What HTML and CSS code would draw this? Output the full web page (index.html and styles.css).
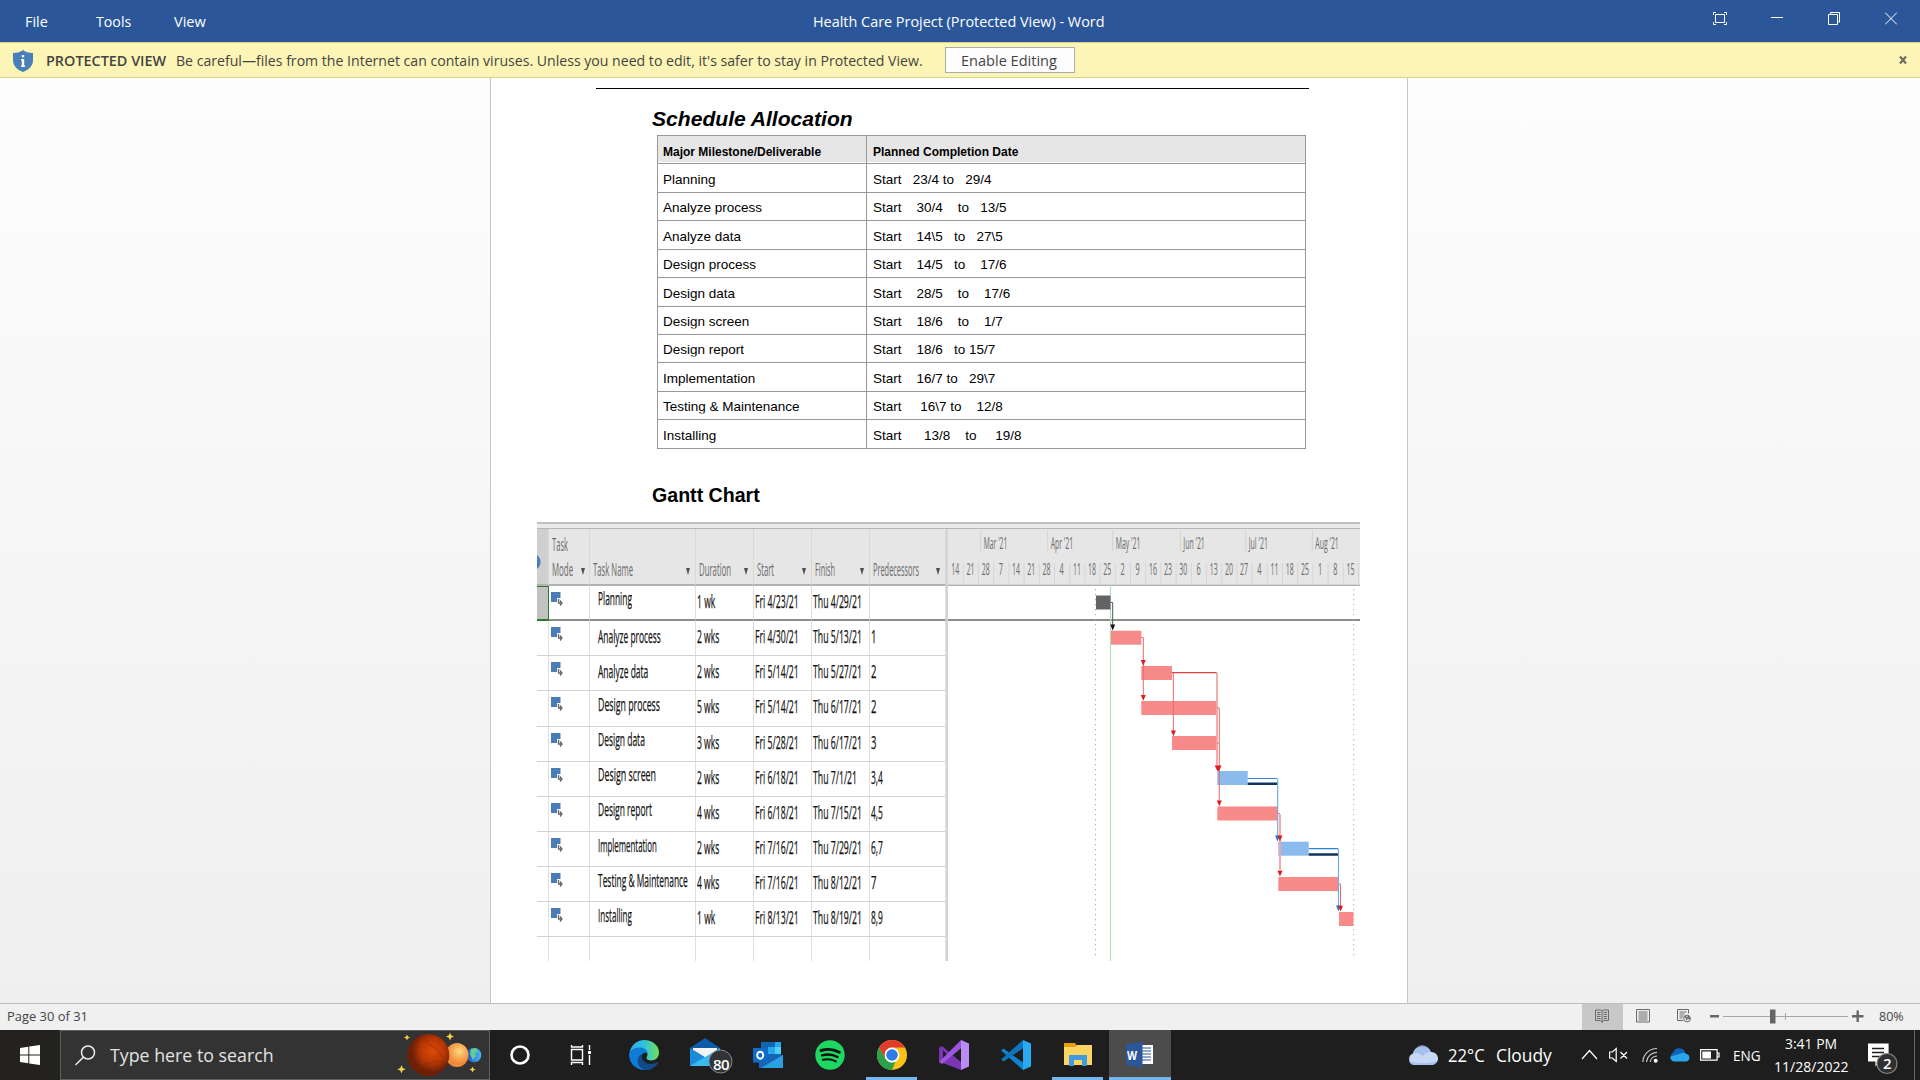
FILE: index.html
```html
<!DOCTYPE html>
<html lang="en">
<head>
<meta charset="utf-8">
<title>Health Care Project (Protected View) - Word</title>
<link rel="stylesheet" href="styles.css">
</head>
<body>
<header class="titlebar">
  <nav class="menu">
    <span class="slot slot-file"><span class="fit" data-w="23">File</span></span>
    <span class="slot slot-tools"><span class="fit" data-w="35">Tools</span></span>
    <span class="slot"><span class="fit" data-w="32">View</span></span>
  </nav>
  <h1 class="title"><span class="fit" data-w="292">Health Care Project (Protected View) - Word</span></h1>
  <div class="winbtns">
    <svg width="14" height="13" viewBox="0 0 14 13"><path d="M.5 3V.5H3M11 .5h2.500V3M.5 10v2.500H3M13.500 10v2.500H11M2.500 2.500h9v8h-9z"/></svg>
    <svg width="12" height="13" viewBox="0 0 12 13"><path d="M0 5.500h12"/></svg>
    <svg width="12" height="13" viewBox="0 0 12 13"><path d="M.5 2.500h9v10h-9zM2.500 2.500v-2h9v9.500h-2"/></svg>
    <svg width="12" height="13" viewBox="0 0 12 13"><path d="M0 .5l12 12M12 .5l-12 12"/></svg>
  </div>
</header>

<section class="banner">
  <svg class="shield" width="20" height="22" viewBox="0 0 20 22"><path fill="#4a7ebb" d="M10 0c2 2 5.500 3 10 3v7c0 6-4 9.500-10 12C4 19.500 0 16 0 10V3c4.500 0 8-1 10-3z"/><path fill="#fff" d="M8.800 5h2.400v2.300H8.800zM8 9h3.200v6.500H12V17H8v-1.500h.8v-5H8z"/></svg>
  <strong class="fit" data-w="120">PROTECTED VIEW</strong>
  <span class="fit banner-text" data-w="747">Be careful—files from the Internet can contain viruses. Unless you need to edit, it's safer to stay in Protected View.</span>
  <button class="enable"><span class="fit" data-w="96">Enable Editing</span></button>
  <svg class="dismiss" width="8" height="8" viewBox="0 0 8 8"><path d="M1 .5l6 7M7 .5l-6 7" stroke="#6f6d5c" stroke-width="2.200"/></svg>
</section>

<main class="canvas">
  <article class="page">
    <hr class="rule">
    <h2 class="h-schedule"><span class="fit" data-w="200.500">Schedule Allocation</span></h2>
    <div class="schedule">
      <div class="th"><span class="fit" data-w="158">Major Milestone/Deliverable</span></div><div class="th"><span class="fit" data-w="145">Planned Completion Date</span></div>
      <div>Planning</div><div>Start   23/4 to   29/4</div>
      <div><span class="cut">Analyze process</span></div><div>Start    30/4    to   13/5</div>
      <div>Analyze data</div><div>Start    14\5   to   27\5</div>
      <div><span class="cut">Design process</span></div><div>Start    14/5   to    17/6</div>
      <div>Design data</div><div>Start    28/5    to    17/6</div>
      <div><span class="cut">Design screen</span></div><div>Start    18/6    to    1/7</div>
      <div><span class="cut">Design report</span></div><div>Start    18/6   to 15/7</div>
      <div>Implementation</div><div>Start    16/7 to   29\7</div>
      <div><span class="cut">Testing &amp; Maintenance</span></div><div>Start     16\7 to    12/8</div>
      <div>Installing</div><div>Start      13/8    to     19/8</div>
    </div>
    <h2 class="h-gantt"><span class="fit" data-w="108">Gantt Chart</span></h2>
    <figure class="gantt">
      <div class="gantt-strip"></div>
      <div class="gantt-body">
        <div class="tasks" id="tasks">
          <div class="hd info"></div>
          <div class="hd mode"><span><span class="fit" data-w="16">Task</span><br><span class="fit" data-w="21">Mode</span></span><i></i></div>
          <div class="hd"><span class="fit" data-w="40">Task Name</span><i></i></div>
          <div class="hd"><span class="fit" data-w="32">Duration</span><i></i></div>
          <div class="hd"><span class="fit" data-w="17">Start</span><i></i></div>
          <div class="hd"><span class="fit" data-w="20">Finish</span><i></i></div>
          <div class="hd"><span class="fit" data-w="46">Predecessors</span><i></i></div>
        </div>
        <svg class="timeline" width="412" height="432" viewBox="948 529 412 432">
          <rect x="948" y="529" width="412" height="55.500" fill="#e6e6e6"/>
          <path d="M948 585.300h412" stroke="#b2b2b2" stroke-width="1.500"/>
          <path d="M948 620h412" stroke="#8c8c8c" stroke-width="2"/>
          <g id="scale"></g>
          <path d="M1095.500 589v370M1353.700 589v370" stroke="#aaa" stroke-dasharray="1.300 3.700"/>
          <path d="M1110.500 585v376" stroke="#b7ddb8" stroke-width="1.200"/>
          <rect x="1096" y="595.500" width="14.500" height="14" fill="#636363"/>
          <g fill="#f88a8a">
            <rect x="1111" y="630.700" width="30.300" height="14"/><rect x="1141.300" y="666" width="30.700" height="14"/>
            <rect x="1141.300" y="701" width="75.700" height="14"/><rect x="1172" y="736" width="45" height="14"/>
            <rect x="1217.300" y="806.500" width="60.400" height="14"/><rect x="1278.300" y="877" width="60.400" height="14"/>
            <rect x="1339" y="912" width="14.500" height="14"/>
          </g>
          <g fill="#8bbbed"><rect x="1217.300" y="771" width="30.400" height="14"/><rect x="1278.300" y="841.700" width="30.400" height="14"/></g>
          <path d="M1247.700 783.800h30M1308.700 854.500h30" stroke="#12335e" stroke-width="2.400"/>
          <g fill="none" stroke="#2e82d8" stroke-width="1.200"><path d="M1247.700 778.500h29.500M1308.700 848.700h29.500"/><path stroke="#76addf" d="M1277.700 779v57M1338.500 849v57"/></g>
          <path d="M1110.700 602.500h2V626" fill="none" stroke="#555"/>
          <g fill="none" stroke="#e8696b">
            <path d="M1141.300 637.500h2V697M1173.300 672.500V731M1172 672.500h44.500"/>
            <path stroke="#f3a5a6" stroke-width="1.800" d="M1217 673v93M1280 814v58"/>
            <path d="M1217 708h2.300v94M1217 743h2M1277.700 813.500h2M1338.700 884h1.800v22"/>
          </g>
          <path d="M1172 672.700h44.500" stroke="#e04144" stroke-width="1.300"/>
          <path fill="#111" d="M1110.200 624.500h5l-2.500 6z"/>
          <path fill="#2678cf" d="M1275 835.500h5l-2.500 6zM1336 905.500h5l-2.500 6z"/>
          <path fill="#dd1c1f" d="M1140.800 660h5l-2.500 5.700zM1140.800 695h5l-2.500 5.700zM1170.900 730.500h5l-2.500 5.700zM1214.700 765.500h6.900l-2.500 5.200h-1.900zM1216.800 800.500h5l-2.500 5.700zM1277.500 835.500h5l-2.500 5.700zM1277.500 870.700h5l-2.500 5.700zM1338 905.700h5l-2.500 5.700z"/>
        </svg>
      </div>
    </figure>
  </article>
</main>

<footer class="status">
  <span class="fit pages" data-w="80.500">Page 30 of 31</span>
  <div class="view active"><svg width="14" height="14" viewBox="0 0 14 14"><path d="M7 2v12M.5 1h5L7 2l1.500-1h5v10.500h-5L7 13l-1.500-1.500h-5zM2 3.500h3.500M2 5.500h3.500M2 7.500h3.500M2 9.500h3.500M8.500 3.500H12M8.500 5.500H12M8.500 7.500H12M8.500 9.500H12"/></svg></div>
  <div class="view"><svg width="14" height="14" viewBox="0 0 14 14"><path d="M.5.500h13v12.500H.5zM2.500 3h9M2.500 5h9M2.500 7h9M2.500 9h9M2.500 11h9"/></svg></div>
  <div class="view"><svg width="14" height="14" viewBox="0 0 14 14"><path d="M6 11.500H.5V.5h11v4M2.500 3h7M2.500 5h5M2.500 7h4M2.500 9h3"/><circle cx="10" cy="9.500" r="3.400" fill="#eee"/><path d="M8 7.500l2 1.500-.5 2M11 7l1 2.500 1-.5" stroke-width="1.600"/></svg></div>
  <svg class="zoombar" width="154" height="16" viewBox="0 0 154 16"><path stroke="#a6a6a6" d="M13 8.500h125M75.500 5v7"/><path stroke="#666" stroke-width="2.400" d="M0 8.200h9M142 8.200h11.500M147.700 2.500v11.500"/><path fill="#666" d="M60 1.500h5.500v14H60z"/></svg>
  <span class="fit" data-w="25">80%</span>
</footer>

<div class="taskbar">
  <div class="start"><svg width="20" height="20" viewBox="0 0 20 20"><path fill="#fff" d="M0 3l8.300-1.200v7.700H0zM9.300 1.600L20 0v9.500H9.300zM0 10.500h8.300v7.800L0 17.100zM9.300 10.500H20V20L9.300 18.400z"/></svg></div>
  <div class="search">
    <svg width="21" height="21" viewBox="0 0 21 21"><circle cx="13" cy="7.500" r="6.500" fill="none" stroke="#eee" stroke-width="1.500"/><path d="M8.300 12.200L.5 20" stroke="#eee" stroke-width="1.500"/></svg>
    <span class="fit" data-w="164">Type here to search</span>
    <svg class="planets" width="86" height="46" viewBox="397 1032 86 46">
      <defs>
        <radialGradient id="mars" cx=".6" cy=".4"><stop offset="0" stop-color="#e04a08"/><stop offset=".6" stop-color="#b53606"/><stop offset="1" stop-color="#6e1f06"/></radialGradient>
        <radialGradient id="venus" cx=".6" cy=".35"><stop offset="0" stop-color="#ffd97c"/><stop offset="1" stop-color="#f08a3a"/></radialGradient>
        <linearGradient id="earth"><stop offset="0" stop-color="#2450c8"/><stop offset="1" stop-color="#49b9f5"/></linearGradient>
      </defs>
      <circle cx="474" cy="1055" r="7.300" fill="url(#earth)"/><path fill="#5fd08a" d="M471 1049l5-1 2 4-3 1 1 3-3 4-3-6z"/>
      <ellipse cx="457" cy="1055" rx="11.500" ry="12" fill="url(#venus)"/>
      <circle cx="428.300" cy="1055" r="21" fill="url(#mars)"/>
      <path fill="none" stroke="#8f2b08" stroke-width="1.500" opacity=".35" d="M427 1035c-4 8 4 10 9 14s4 10 11 9M409 1049c6-4 9 2 7 8M415 1068c9-2 15-8 29-7"/>
      <path fill="#f8cf45" d="M407 1034.500l.9 2.100 2.100.9-2.100.9-.9 2.100-.9-2.100-2.100-.9 2.100-.9zM450 1032.500l1.200 2.800 2.800 1.200-2.800 1.200-1.200 2.800-1.200-2.800-2.800-1.200 2.800-1.200zM401.500 1065l1.200 3.100 3 1.200-3 1.200-1.200 3.100-1.200-3.100-3-1.200 3-1.200zM472.500 1066.500l.9 2.100 2.100.9-2.100.9-.9 2.100-.9-2.100-2.100-.9 2.100-.9z"/>
    </svg>
  </div>
  <div class="apps">
    <div class="app"><svg width="32" height="32" viewBox="0 0 32 32"><circle cx="16" cy="16" r="8.500" fill="none" stroke="#fff" stroke-width="2.600"/></svg></div>
    <div class="app"><svg width="32" height="32" viewBox="0 0 32 32"><path fill="none" stroke="#fff" stroke-width="1.400" d="M5.500 10.500h11v10.500h-11zM5.500 6v2h11V6M5.500 26v-2.500h11V26M23.500 6v5M23.500 16v10"/><path fill="#fff" d="M22 12h3v3h-3z"/></svg></div>
    <div class="app"><svg width="32" height="32" viewBox="0 0 32 32">
      <defs><linearGradient id="e1" x1="0" x2="1"><stop offset="0" stop-color="#35a8e8"/><stop offset=".5" stop-color="#2ec2df"/><stop offset="1" stop-color="#6fe34f"/></linearGradient></defs>
      <path fill="url(#e1)" d="M1.500 14C3 6 9 1 16 1c8.500 0 15 5.500 15 12.500 0 5-3.500 8-8 8-3 0-4.500-1.200-4.500-2.500s1-1.500 1-4c0-3-3-5.500-7-5.500-5 0-9 2-11 4.500z"/>
      <path fill="#0d7cd6" d="M1 16c0-4 5-7.500 11-7.500 4.500 0 7.500 2.700 7.500 6-1.500-1-3.500-1-5 .5-3 3-2 9 2 12.500 1.500 1.500 3 2.500 4 3A15.300 15.300 0 0 1 1 16z"/>
      <path fill="#114a8b" d="M14 15c-3 1.500-4.500 4-4.500 7 0 4.500 4 8.500 8.500 9 5 .3 9.500-2.500 12-7 .3-.7-.2-1-.8-.7C20 28 12.500 22.500 14 15z"/></svg></div>
    <div class="app"><svg width="44" height="38" viewBox="0 0 44 38"><path fill="#0b5cab" d="M0 12L15 2l15 10v8H0z"/><path fill="#f4f4f4" d="M3 12h24v3l-12 8-12-8z"/><path fill="#1c8ad8" d="M0 12l30 18H0z"/><path fill="#39b8f2" d="M30 12v18H0l15-9z"/><path fill="#f4f4f4" d="M3 12h24l-12 9z"/><circle cx="30.500" cy="25.500" r="11.500" fill="#303438" stroke="#888"/></svg><span class="badge">80</span></div>
    <div class="app"><svg width="32" height="32" viewBox="0 0 32 32"><path fill="#1066b5" d="M9 3h20v14H9z"/><path fill="#28a8ea" d="M16 8h7v7h-7zM23 3h6v5h-6z"/><path fill="#50d0f8" d="M23 8h6v7h-6z"/><path fill="#1565b5" d="M7 16h24v13H7z"/><path fill="#2a9fe4" d="M31 16v13H9z"/><path fill="#0f6cc4" d="M1 9h14.500v14.500H1z"/><ellipse cx="8.200" cy="16.200" rx="3" ry="3.500" fill="none" stroke="#fff" stroke-width="1.900"/></svg></div>
    <div class="app"><svg width="32" height="32" viewBox="0 0 32 32"><circle cx="16" cy="16" r="14.700" fill="#1ed760"/><path fill="none" stroke="#101010" stroke-linecap="round" d="M7 11.500c6-1.800 13-1.200 18.300 1.700" stroke-width="2.900"/><path fill="none" stroke="#101010" stroke-linecap="round" d="M8 16.300c5-1.400 11-.9 15.500 1.700" stroke-width="2.400"/><path fill="none" stroke="#101010" stroke-linecap="round" d="M8.800 20.800c4.500-1.100 9-.7 13 1.600" stroke-width="2"/></svg></div>
    <div class="app open"><svg width="32" height="32" viewBox="0 0 32 32"><circle cx="16" cy="16" r="15" fill="#fbc116"/><path fill="#e33b2e" d="M3 8.500A15 15 0 0 1 29 8.500H16a7.500 7.500 0 0 0-6.800 4.500l-.3 6z"/><path fill="#2da04a" d="M3 8.500l6.500 11.200A7.500 7.500 0 0 0 19.500 22.600L16 31A15 15 0 0 1 3 8.500z"/><circle cx="16" cy="16" r="7.400" fill="#fff"/><circle cx="16" cy="16" r="5.800" fill="#2f7bea"/></svg></div>
    <div class="app"><svg width="32" height="32" viewBox="0 0 32 32"><path fill="#7a35b5" d="M1 9l3-2 20 17-1 7L1 22.500z M5 11.500v9L10 16z" fill-rule="evenodd"/><path fill="#9a56dc" d="M4 25l-3-2L23 1l1.500 7z"/><path fill="#b98bf3" d="M23 1l8 3.500v23L23 31z"/></svg></div>
    <div class="app"><svg width="32" height="32" viewBox="0 0 32 32"><path fill="#1083cf" d="M1 11.500L3.500 9.500 25 25l-2 6z"/><path fill="#0d74bd" d="M1 20.500l2.500 2L25 8l-2-7z"/><path fill="#2aaaf2" d="M23 1l8 3.500v23L23 31z"/></svg></div>
    <div class="app open"><svg width="32" height="32" viewBox="0 0 32 32"><path fill="#e3a008" d="M2 4h11l2 3v5H2z"/><path fill="#fcd462" d="M2 8h11l2-2h15v20H2z"/><path fill="#3f9be0" d="M7 16h18v11h-5v-6h-8v6H7z"/></svg></div>
    <div class="app open current"><svg width="32" height="32" viewBox="0 0 32 32"><path fill="#fff" d="M17 6h12v19H17z"/><path stroke="#2b579a" stroke-width="1.200" d="M17 9h10M17 12h10M17 15h10M17 18h10M17 21h10"/><path fill="#2b579a" d="M2 5.500L18.500 2.500v26.500L2 25.500z"/></svg><b>W</b></div>
  </div>
  <div class="tray">
    <svg class="cloud" width="30" height="22" viewBox="0 0 30 22"><path fill="#c7d7f6" d="M6 21a6 6 0 0 1-1-11.500A9.500 9.500 0 0 1 23 8a6.500 6.500 0 0 1 1 13z"/><path fill="#8fb0ea" d="M1 17c8 3 20 3 28 0-1 3-3 4-5 4H6c-2 0-4-1-5-4zM6 9c4-.5 7 1 9 3 2-3 5-4.500 8-4C21 3 17 1 14 1S7 4 6 9z" opacity=".6"/></svg>
    <span class="fit temp" data-w="37">22°C</span>
    <span class="fit cloudy" data-w="56">Cloudy</span>
    <svg class="t-caret" width="17" height="16" viewBox="0 0 17 16"><path d="M1 12l7.500-8.500L16 12"/></svg>
    <svg class="t-vol" width="19" height="16" viewBox="0 0 19 16"><path d="M.6 5v6h2.800l3.800 3.500v-13L3.400 5zM11.500 5l6.500 6.500M18 5l-6.500 6.500"/></svg>
    <svg class="t-net" width="16" height="16" viewBox="0 0 16 16"><path opacity=".75" d="M.8 15A14 14 0 0 1 15 1.500M4.500 15A10.500 10.500 0 0 1 15 5.300M8.200 15A7 7 0 0 1 15 9"/><circle cx="13.700" cy="13.700" r="1.400" fill="#fff"/></svg>
    <svg class="t-drive" width="20" height="14" viewBox="0 0 20 14"><path fill="#0f62b8" stroke="none" d="M4 12A4 4 0 0 1 3 4.500 6.500 6.500 0 0 1 15 4l2 6z"/><path fill="#28a8ea" stroke="none" d="M4 13.500a4 4 0 0 1-3.500-5L11 5.500a5 5 0 0 1 5 .2A4 4 0 0 1 16.500 13.500z"/></svg>
    <svg class="t-bat" width="20" height="12" viewBox="0 0 20 12"><path d="M.6.700h16.500v10.500H.6zM17.500 4h1.500v4h-1.500"/><path fill="#fff" stroke="none" d="M2.300 2.500h8.700v7H2.300z"/></svg>
    <span class="fit eng" data-w="28">ENG</span>
    <div class="clock"><span class="fit" data-w="52">3:41 PM</span><span class="fit" data-w="75">11/28/2022</span></div>
    <div class="notes"><svg width="30" height="32" viewBox="0 0 30 32"><path fill="#fff" d="M0 1h20v17h-8l-4 4v-4H0z"/><path stroke="#1e1e1e" stroke-width="1.400" d="M4 5.500h12M4 9.500h12M4 13.500h8"/><circle cx="19" cy="20.500" r="10" fill="#303030" stroke="#888"/></svg><span class="badge count">2</span></div>
    <div class="peek"></div>
  </div>
</div>
<script src="app.js"></script>
</body>
</html>
```
FILE: styles.css
```css
* { box-sizing: border-box; }
body {
  margin: 0; width: 1920px; height: 1080px; overflow: hidden;
  display: grid; grid-template-rows: 42px 36px 925px 27px 50px;
  font: 15px "Open Sans", "Noto Sans", sans-serif; background: #fff;
}
h1, h2, figure { margin: 0; font: inherit; }
svg { display: block; flex: none; }
.fit { display: inline-block; white-space: nowrap; transform-origin: 0 50%; flex: none; }

/* title bar */
.titlebar { background: #2b579a; color: #fff; display: grid; grid-template-columns: 813px 1fr auto; align-items: center; }
.menu { display: flex; padding-left: 25px; }
.slot-file { width: 71px; }
.slot-tools { width: 78px; }
.winbtns { display: flex; padding: 0 23px 5px 0; gap: 45px; }
.winbtns svg { fill: none; stroke: #fff; }
.winbtns svg:first-child { margin-right: -1px; }

/* protected view banner */
.banner { background: #fcf5b6; border: solid #d8d38c; border-width: 1px 0; display: flex; align-items: center; color: #444; padding: 0 13px; }
.shield { margin-right: 13px; margin-top: 2px; }
.banner strong { font-weight: 600; }
.banner-text { margin-left: 10px; }
.enable { width: 130px; height: 26px; margin-left: 22px; padding: 0 0 0 15px; border: 1px solid #ababab; background: #fdfdfd; color: #444; font: inherit; text-align: left; display: flex; align-items: center; }
.dismiss { margin-left: auto; }

/* document */
.canvas { background: linear-gradient(#fdfdfd, #efefef); padding-left: 490px; }
.page { width: 918px; height: 925px; background: #fff; border: solid #c6c6c6; border-width: 0 1px; padding: 10px 0 0 46px; color: #000; font-family: "Liberation Sans", Arial, sans-serif; }
.rule { width: 713px; height: 1px; border: 0; background: #000; margin: 0 0 0 59px; }
.h-schedule { margin-left: 115px; height: 46px; padding-top: 18px; font: italic bold 20.500px/24px "Liberation Sans", Arial, sans-serif; }
.schedule {
  margin-left: 120px; width: 649px; border: solid #999; border-width: 1px 0 0 1px;
  display: grid; grid-template-columns: 209px 439px; grid-template-rows: 28px 29px 28px 29px 28px 29px 28px 28px 29px 28px 29px;
  font-size: 13.500px; white-space: pre;
}
.schedule > div { border: solid #999; border-width: 0 1px 1px 0; padding: 3px 0 0 5px; display: flex; align-items: center; line-height: 16px; }
.schedule > div:nth-child(even) { padding-left: 6px; }
.schedule > .th { background: #e6e6e6; font-size: 12px; font-weight: bold; padding-top: 5px; box-shadow: inset 0 -1px #fff; }
.cut { clip-path: inset(0 0 1.500px 0); }
.h-gantt { margin-left: 115px; height: 73px; padding-top: 33px; font: bold 20.500px/26px "Liberation Sans", Arial, sans-serif; }

/* gantt picture */
.gantt { width: 823px; height: 439px; font-family: "Open Sans", "Noto Sans", sans-serif; }
.gantt-strip { height: 7px; background: #e9e9e9; border-top: 2px solid #bfbfbf; border-bottom: 1px solid #b5b5b5; }
.gantt-body { display: flex; background: #fff; }
.timeline { overflow: visible; }
.tasks { width: 411px; height: 432px; border-right: 2px solid #d4d4d4; overflow: hidden; display: grid; grid-template-columns: 12px 41px 106px 58px 58px 58px 76px; grid-template-rows: 57px repeat(11, 35.150px); align-content: start; }
.tasks > div { border: solid #dedede; border-width: 0 1px 1px 0; border-bottom-color: #d2d2d2; display: flex; align-items: center; font-size: 19px; line-height: 24px; color: #111; padding: 0 0 4px 1px; min-width: 0; -webkit-text-stroke: .25px #111; }
.tasks > div.hd { background: #e6e6e6; color: #6b6b6b; font-size: 18px; align-items: flex-end; border-color: #d8d8d8; border-bottom: 2px solid #b2b2b2; padding: 0 5px 3px 3px; justify-content: space-between; -webkit-text-stroke: 0; }
.tasks > div.mode { line-height: 25px; padding-bottom: 0; }
.tasks > div.mode > span { display: block; height: 52px; width: 24px; }
.hd i { border: solid transparent; border-width: 7px 2.500px 0; border-top-color: #505050; margin-bottom: 6px; flex: none; }
.hd.mode i { margin: 0 -1px 9px 0; }
.tasks > div.info { background: radial-gradient(circle at -5px 33px, #4a7ebb 8px, #cfcfcf 9px); }
.tasks > div.name { padding: 0 0 4px 8px; }
.tasks > div.raised { padding-bottom: 9px; }
.tasks > div.first { border-bottom: 2px solid #8c8c8c; }
.tasks > div.selected { background: #c2c2c2; border: solid #2b7a2b; border-width: 1px 1px 2px 0; }
.tasks > div.icon { align-items: flex-start; padding: 5px 0 0 2px; }

/* status bar */
.status { background: #f0f0f0; border-top: 1px solid #bdbdbd; display: flex; align-items: center; color: #444; font-size: 13px; line-height: 24px; padding: 0 16px 0 7px; }
.status > .fit { padding-bottom: 2px; }
.view { width: 41px; height: 26px; display: flex; justify-content: center; padding: 5px 2px 0 0; }
.view svg { fill: none; stroke: #6a6a6a; }
.active { background: #c8c8c8; margin-left: auto; }
.zoombar { margin: 0 15px 2px 5px; }

/* taskbar */
.taskbar { background: #1e1e1e; display: flex; color: #fff; }
.start { width: 60px; display: grid; place-items: center; background: #23221e; }
.search { width: 430px; background: #333; border: 1px solid #606060; display: flex; align-items: center; padding-left: 14px; color: #e2e2e2; font-size: 18px; }
.search .fit { margin-left: 14px; }
.planets { margin-left: 123px; }
.apps { display: flex; margin-left: -1px; }
.app { width: 62px; display: flex; justify-content: center; align-items: center; position: relative; }
.app:nth-child(4) svg { margin-left: 12px; }
.open::after { content: ""; position: absolute; left: 5px; right: 6px; bottom: 0; height: 3px; background: #76b6ee; }
.current { background: #4c4c4c; }
.current::after { left: 0; right: 0; }
.app b { position: absolute; left: 18px; top: 16px; font: bold 13px/18px "Open Sans", sans-serif; transform: scaleX(.8); transform-origin: 0 0; }
.badge { position: absolute; left: 34px; top: 24px; width: 24px; text-align: center; font: 600 15px/21px "Open Sans", sans-serif; letter-spacing: -.5px; }
.tray { margin-left: auto; display: flex; align-items: center; width: 512px; font-size: 15px; }
.tray svg { fill: none; stroke: #fff; stroke-width: 1.200; }
.tray .cloud { stroke: none; }
.temp, .cloudy { font-size: 18px; }
.temp { margin-left: 10px; }
.tray .t-caret { margin-left: 30px; }
.cloudy { margin-left: 11px; }
.tray .t-vol { margin-left: 11px; }
.tray .t-net { margin-left: 14px; }
.tray .t-drive { margin-left: 12px; }
.tray .t-bat { margin-left: 10px; }
.eng { margin-left: 13px; }
.clock { width: 76px; margin-left: 13px; display: flex; flex-direction: column; align-items: flex-start; line-height: 23px; }
.clock .fit:first-child { margin-left: 11px; }
.notes { position: relative; margin-left: 18px; height: 24px; }
.count { left: 7px; top: 10px; }
.peek { margin-left: auto; width: 6px; height: 50px; border-left: 1px solid #666; }
```
FILE: app.js
```js
// name, name width, raised, duration, start, finish, predecessors
const tasks = [
  ['Planning', 34, 1, '1 wk', 'Fri 4/23/21', 'Thu 4/29/21', ''],
  ['Analyze process', 63, 0, '2 wks', 'Fri 4/30/21', 'Thu 5/13/21', '1'],
  ['Analyze data', 50.5, 0, '2 wks', 'Fri 5/14/21', 'Thu 5/27/21', '2'],
  ['Design process', 62, 1, '5 wks', 'Fri 5/14/21', 'Thu 6/17/21', '2'],
  ['Design data', 47, 1, '3 wks', 'Fri 5/28/21', 'Thu 6/17/21', '3'],
  ['Design screen', 58, 1, '2 wks', 'Fri 6/18/21', 'Thu 7/1/21', '3,4'],
  ['Design report', 54, 1, '4 wks', 'Fri 6/18/21', 'Thu 7/15/21', '4,5'],
  ['Implementation', 59, 1, '2 wks', 'Fri 7/16/21', 'Thu 7/29/21', '6,7'],
  ['Testing & Maintenance', 90, 1, '4 wks', 'Fri 7/16/21', 'Thu 8/12/21', '7'],
  ['Installing', 34, 1, '1 wk', 'Fri 8/13/21', 'Thu 8/19/21', '8,9'],
];
const icon = '<svg width="12" height="16" viewBox="0 0 12 16"><path fill="#4a7db8" d="M0 1h9.500v10H0z"/><path fill="#fff" d="M6 7h5v8H6z"/><path fill="none" stroke="#666" stroke-width="1.300" d="M7.500 8v4H11M9 9.500l2 2.500-2 2.500"/></svg>';
const grid = document.getElementById('tasks');
function cell(cls, text, w) {
  const d = document.createElement('div');
  d.className = cls;
  if (text) {
    const s = document.createElement('span');
    s.className = 'fit';
    s.dataset.w = w;
    s.textContent = text;
    d.append(s);
  }
  grid.append(d);
  return d;
}
tasks.forEach((t, i) => {
  const f = i === 0 ? ' first' : '';
  cell(i === 0 ? 'selected' : '');
  cell('icon' + f).innerHTML = icon;
  cell('name' + (t[2] ? ' raised' : '') + f, t[0], t[1]);
  cell(f, t[3], t[3].length > 4 ? 22.5 : 18.5);
  cell(f, t[4], 44);
  cell(f, t[5], t[5].length > 10 ? 49 : 44);
  cell(f, t[6], t[6].length > 1 ? 12 : 5.5);
});
for (let i = 0; i < 7; i++) cell('');

// timeline scale
let out = '';
[["Mar '21", 980.7, 23.7], ["Apr '21", 1047.7, 22.5], ["May '21", 1112.7, 24.7], ["Jun '21", 1180.3, 21.5], ["Jul '21", 1245.7, 19.3], ["Aug '21", 1312.3, 23.5]].forEach(([t, x, w]) => {
  out += `<path d="M${x} 530v21" stroke="#d2d2d2"/><text x="${x + 3}" y="549.300" textLength="${w}" lengthAdjust="spacingAndGlyphs">${t}</text>`;
});
'14 21 28 7 14 21 28 4 11 18 25 2 9 16 23 30 6 13 20 27 4 11 18 25 1 8 15'.split(' ').forEach((t, i) => {
  const w = t.length > 1 ? 8 : 4.2, x = 955.3 + 15.2 * i;
  out += `<path d="M${(x + 8).toFixed(1)} 563v21" stroke="#d6d6d6"/><text x="${(x - w / 2).toFixed(1)}" y="574.700" textLength="${w}" lengthAdjust="spacingAndGlyphs">${t}</text>`;
});
const scale = document.getElementById('scale');
scale.setAttribute('font-size', '16');
scale.setAttribute('fill', '#6b6b6b');
scale.innerHTML = out;

document.querySelectorAll('.fit').forEach(el => {
  const natural = el.offsetWidth, w = +el.dataset.w;
  el.style.transform = `scaleX(${w / natural})`;
  el.style.marginRight = `${w - natural}px`;
});
```
